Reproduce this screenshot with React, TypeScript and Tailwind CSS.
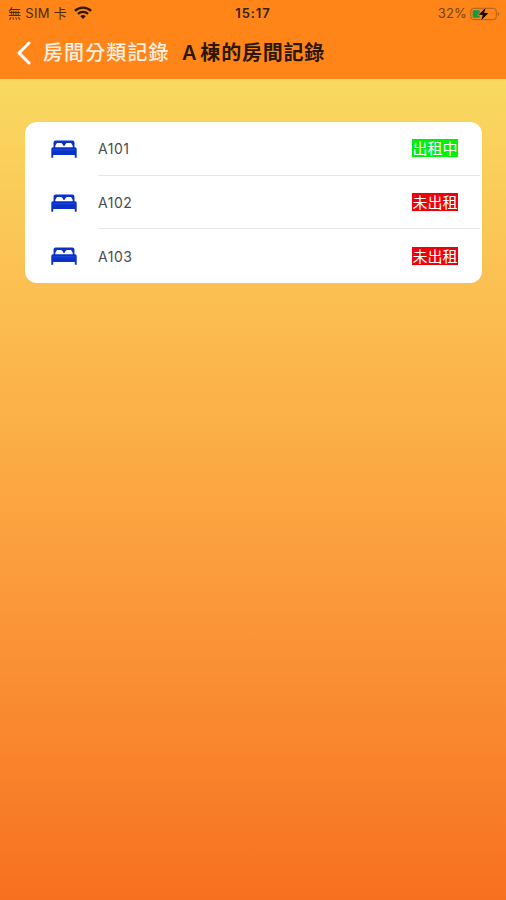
interface Room {
  name: string
  rented: boolean
}

const rooms: Room[] = [
  { name: 'A101', rented: true },
  { name: 'A102', rented: false },
  { name: 'A103', rented: false },
]

function WifiIcon() {
  return (
    <svg width="18" height="13" viewBox="0 0 18 13" fill="none" stroke="#2a1a08">
      <path d="M.9 4.900a11.600 11.600 0 0 1 16.200 0" strokeWidth="2.400" />
      <path d="M3.900 7.900a7.400 7.400 0 0 1 10.200 0" strokeWidth="2.200" />
      <path d="M9 13 6.300 10.300a3.900 3.900 0 0 1 5.400 0Z" fill="#2a1a08" stroke="none" />
    </svg>
  )
}

function BatteryIcon() {
  return (
    <svg width="30" height="14" viewBox="0 0 30 14" fill="none">
      <rect x="0.8" y="1.3" width="25.5" height="11.4" rx="3" stroke="#a8621f" />
      <path d="M27.8 5v4c2-.8 2-3.2 0-4Z" fill="#a8621f" />
      <rect x="2.7" y="3.2" width="7" height="7.6" rx="1" fill="#129a4c" />
      <path
        d="M15.8 .6 8.800 7.700h4.100l-1.800 5.800 7.200-7.400h-4.200Z"
        fill="#000"
        stroke="#ff8518"
        strokeWidth="1.4"
        paintOrder="stroke"
      />
    </svg>
  )
}

function BedIcon() {
  return (
    <svg width="26" height="18" viewBox="0 0 26 18">
      <path d="M2.500 8V2.800A2.300 2.300 0 0 1 4.800.500h16.400a2.300 2.300 0 0 1 2.300 2.300V8Z" fill="#0a32cb" />
      <path d="M4.500 7V5.300L6 3h4.500l1.800 2.200V7ZM21.500 7V5.300L20 3h-4.500l-1.800 2.200V7Z" fill="#fff" />
      <path d="M4.500 5.900h17V8h-17Z" fill="#fff" />
      <path
        d="M2 7.300h22a1.700 1.700 0 0 1 1.700 1.700v8.700h-1.900V15H2.200v2.700H.3V9A1.700 1.700 0 0 1 2 7.300Z"
        fill="#0a32cb"
      />
      <path d="M2 9.800h22" stroke="#365bdc" strokeWidth="0.600" />
    </svg>
  )
}

function StatusBar() {
  return (
    <div className="grid h-[27px] grid-cols-3 items-center px-2 text-[13px] text-[#4a2b0c]">
      <div className="flex items-center">
        <span className="w-[66px] whitespace-nowrap pt-px tracking-[0.3px]">無 SIM 卡</span>
        <span className="pb-[3px]">
          <WifiIcon />
        </span>
      </div>
      <span className="text-center text-[13px] font-semibold tracking-[0.9px] text-[#36200a]">
        15:17
      </span>
      <div className="-mr-0.5 flex items-center justify-end gap-[3px]">
        <span className="tracking-[0.2px] text-[#75420f]">32%</span>
        <BatteryIcon />
      </div>
    </div>
  )
}

function NavBar() {
  return (
    <div className="flex h-[51px] items-center pl-[17px] text-xl leading-none">
      <svg
        width="14"
        height="24"
        viewBox="0 0 14 24"
        fill="none"
        stroke="#fff"
        strokeWidth="3"
        strokeLinecap="round"
        strokeLinejoin="round"
      >
        <path d="M12 2 2 12l10 10" />
      </svg>
      <span className="ml-3 w-[139px] whitespace-nowrap font-medium tracking-[1.100px] text-[#fff0e2]">
        房間分類記錄
      </span>
      <h1 className="whitespace-nowrap font-semibold tracking-[0.800px] text-[#2b1704]">
        A<span className="ml-[3px]">棟的房間記錄</span>
      </h1>
    </div>
  )
}

function RoomRow({ room }: { room: Room }) {
  return (
    <li className="group flex h-[53.700px] items-center pl-[26px]">
      <BedIcon />
      <div className="ml-[21px] mr-0.5 flex h-full flex-1 items-center justify-between border-b border-[#e6e6e8] pr-[22px] group-last:border-b-0">
        <span className="pt-0.5 text-sm tracking-[0.500px] text-[#4c4c4c]">{room.name}</span>
        <span
          className={`flex h-[18px] w-[46px] items-center justify-center whitespace-nowrap text-[15px] leading-none text-white ${
            room.rented ? 'bg-[#00f00a]' : 'bg-[#f20008]'
          }`}
        >
          {room.rented ? '出租中' : '未出租'}
        </span>
      </div>
    </li>
  )
}

export default function App() {
  return (
    <div className="flex h-[900px] w-[506px] flex-col overflow-hidden font-['Inter','Noto_Sans_CJK_TC',sans-serif]">
      <header className="h-[79px] shrink-0 bg-[#ff8518]">
        <StatusBar />
        <NavBar />
      </header>
      <main className="flex-1 bg-linear-to-b from-[#f9d961] to-[#f7701f] px-6 pt-[43px]">
        <ul className="ml-px h-[161px] w-[457px] overflow-hidden rounded-xl bg-white">
          {rooms.map((room) => (
            <RoomRow key={room.name} room={room} />
          ))}
        </ul>
      </main>
    </div>
  )
}
